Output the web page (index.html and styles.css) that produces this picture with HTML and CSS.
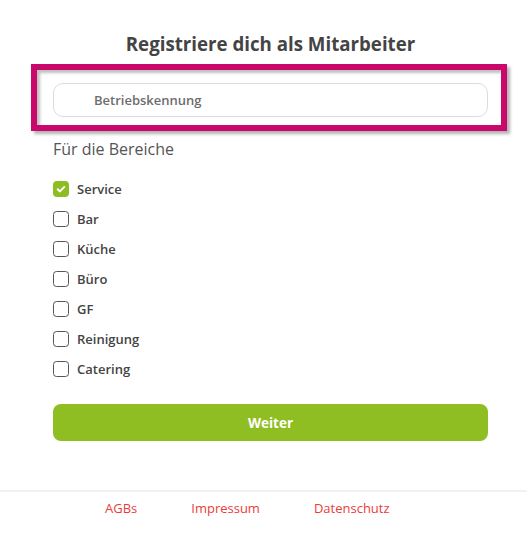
FILE: index.html
```html
<!DOCTYPE html>
<html lang="de">
<head>
<meta charset="utf-8">
<title>Registrieren</title>
<link rel="stylesheet" href="styles.css">
</head>
<body>
<main class="page">
  <h1 class="title">Registriere dich als Mitarbeiter</h1>
  <div class="highlight">
    <input class="field" type="text" placeholder="Betriebskennung">
  </div>
  <h2 class="subtitle">Für die Bereiche</h2>
  <ul class="areas">
    <li class="area"><span class="box checked"><svg viewBox="0 0 16 16" width="16" height="16"><path d="M4.2 8.3l2.6 2.5 5-5.2" fill="none" stroke="#fff" stroke-width="2.2" stroke-linecap="round" stroke-linejoin="round"/></svg></span><span class="label">Service</span></li>
    <li class="area"><span class="box"></span><span class="label">Bar</span></li>
    <li class="area"><span class="box"></span><span class="label">Küche</span></li>
    <li class="area"><span class="box"></span><span class="label">Büro</span></li>
    <li class="area"><span class="box"></span><span class="label">GF</span></li>
    <li class="area"><span class="box"></span><span class="label">Reinigung</span></li>
    <li class="area"><span class="box"></span><span class="label">Catering</span></li>
  </ul>
  <button class="next" type="button">Weiter</button>
</main>
<footer class="footer">
  <a href="#">AGBs</a>
  <a href="#">Impressum</a>
  <a href="#">Datenschutz</a>
</footer>
</body>
</html>
```
FILE: styles.css
```css
* { box-sizing: border-box; }
html, body { margin: 0; padding: 0; background: #fff; }
body {
  font-family: "Open Sans", "Noto Sans", "Liberation Sans", sans-serif;
  color: #444;
}
.page {
  padding: 32px 39px 0 53px;
}
.title {
  margin: 0;
  font-size: 18.7px;
  line-height: 24px;
  font-weight: 700;
  text-align: center;
  color: #444;
}
.highlight {
  margin: 8px -19px 0 -22px;
  border: 6px solid #c9086c;
  padding: 13px 13px 8px 16px;
  box-shadow: 3px 3px 3px rgba(0,0,0,0.3), inset 3px 3px 3px rgba(0,0,0,0.25);
  background: #fff;
}
.field {
  display: block;
  width: 100%;
  height: 34px;
  border: 1px solid #dcdcdc;
  border-radius: 10px;
  padding: 0 0 0 40px;
  font-family: inherit;
  font-size: 13px;
  font-weight: 600;
  color: #555;
  outline: none;
}
.field::placeholder { color: #6d6d6d; }
.subtitle {
  margin: 6px 0 0;
  font-size: 16px;
  line-height: 24px;
  font-weight: 400;
  color: #555;
}
.areas {
  list-style: none;
  margin: 13px 0 0;
  padding: 0;
}
.area {
  display: flex;
  align-items: center;
  gap: 8px;
  height: 30px;
}
.box {
  width: 16px;
  height: 16px;
  border: 1.5px solid #555;
  border-radius: 3.5px;
  display: flex;
  align-items: center;
  justify-content: center;
  flex: none;
}
.box.checked {
  background: #8dbd22;
  border-color: #8dbd22;
}
.box svg { width: 14px; height: 14px; }
.label {
  font-size: 13px;
  font-weight: 600;
  color: #444;
}
.next {
  display: block;
  width: 100%;
  height: 37px;
  margin-top: 20px;
  border: 0;
  border-radius: 8px;
  background: #8fbe22;
  color: #fff;
  font-family: inherit;
  font-size: 13.5px;
  font-weight: 700;
}
.footer {
  margin-top: 49px;
  border-top: 2px solid #f1f1f1;
  padding: 7px 0 0 105px;
  display: flex;
  gap: 54px;
  height: 65px;
}
.footer a {
  font-size: 13px;
  line-height: 18px;
  color: #ea3d3a;
  text-decoration: none;
}
```
